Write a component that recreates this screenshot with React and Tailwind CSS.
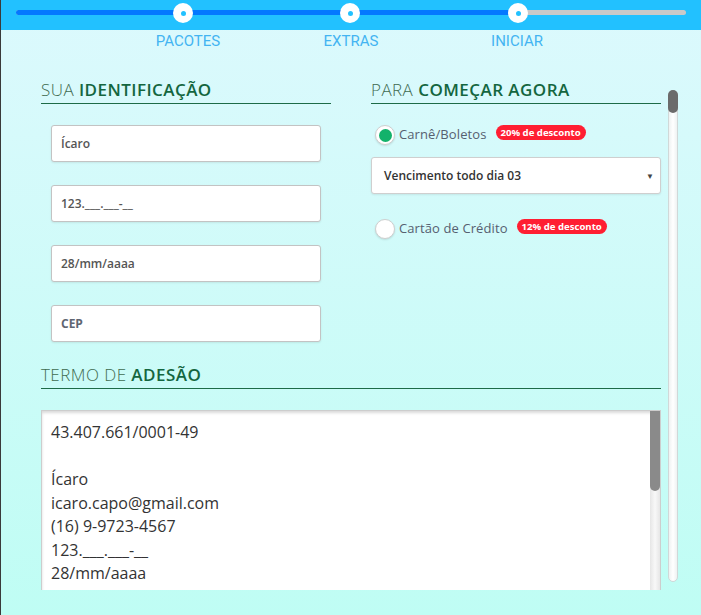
import React from 'react';

const steps = [
  { label: 'PACOTES', pos: 'left-[167px]' },
  { label: 'EXTRAS', pos: 'left-[334px]' },
  { label: 'INICIAR', pos: 'left-[502px]' },
];

function Heading({ light, bold, className = '' }) {
  return (
    <h2 className={`text-[17px] tracking-[0.45px] leading-[24px] pb-[1px] border-b border-[#1d6b47] uppercase ${className}`}>
      <span className="font-light text-[#3f6b50]">{light} </span>
      <span className="font-semibold text-[#14663f]">{bold}</span>
    </h2>
  );
}

function Field({ value, bold }) {
  return (
    <div className={`w-[270px] h-[37px] bg-white border border-[#c3c3c3] rounded-[3px] shadow-[0_1px_2px_rgba(0,0,0,0.08)] flex items-center pl-[9px] text-[12px] ${bold ? 'font-bold text-[#5f6672]' : 'font-semibold text-[#555]'}`}>
      {value}
    </div>
  );
}

function Radio({ checked, label, badge, className = '' }) {
  return (
    <div className={`flex items-center h-[20px] ${className}`}>
      <div className="w-[20px] h-[20px] rounded-full border border-[#cfcfcf] bg-white shadow-[0_1px_2px_rgba(0,0,0,0.12)] flex items-center justify-center">
        {checked && <div className="w-[13px] h-[13px] rounded-full bg-[#13b26b]" />}
      </div>
      <span className="ml-[4px] text-[13px] tracking-[0.1px] text-[#566070]">{label}</span>
      <span className="ml-[9px] self-start h-[15px] px-[5px] rounded-full bg-[#ff1e32] text-white text-[9.6px] font-bold leading-[15px]">
        {badge}
      </span>
    </div>
  );
}

export default function App() {
  const termo = ['43.407.661/0001-49', '\u00a0', 'Ícaro', 'icaro.capo@gmail.com', '(16) 9-9723-4567', '123.___.___-__', '28/mm/aaaa'];

  return (
    <div className="w-[701px] h-[615px] overflow-hidden flex flex-col border-l border-[#3a3a3a] bg-gradient-to-b from-[#dcf9fd] to-[#bffdf4] font-['Open_Sans',sans-serif]">
      {/* stepper */}
      <div className="h-[30px] shrink-0 bg-[#22c1ff] pl-[15px] pt-[10px]">
        <div className="relative w-[670px] h-[5px] rounded-full bg-[#c9c9c9]">
          <div className="w-[502px] h-[5px] rounded-full bg-[#0478ff]" />
          {steps.map((s) => (
            <div
              key={s.label}
              className={`absolute top-[-7px] ${s.pos} -ml-[10px] w-[20px] h-[20px] rounded-full bg-white flex items-center justify-center`}
            >
              <div className="w-[5px] h-[5px] rounded-full bg-[#22c1ff]" />
            </div>
          ))}
        </div>
      </div>
      <div className="h-[24px] shrink-0 flex pt-[2px] pl-[127px] text-[15px] leading-[18px] text-[#43b4f2] font-['Roboto',sans-serif]">
        <span className="w-[120px] text-center">PACOTES</span>
        <span className="w-[120px] ml-[43px] text-center">EXTRAS</span>
        <span className="w-[120px] ml-[46px] text-center">INICIAR</span>
      </div>

      {/* main */}
      <div className="h-[536px] shrink-0 flex overflow-hidden pl-[40px] pt-[24px]">
        <div className="w-[620px] flex flex-col">
          <div className="grid grid-cols-[290px_290px] gap-x-[40px]">
            <div>
              <Heading light="Sua" bold="Identificação" />
              <div className="mt-[21px] ml-[10px] flex flex-col gap-[23px]">
                <Field value="Ícaro" />
                <Field value="123.___.___-__" />
                <Field value="28/mm/aaaa" />
                <Field value="CEP" bold />
              </div>
            </div>
            <div>
              <Heading light="Para" bold="Começar Agora" />
              <Radio checked label="Carnê/Boletos" badge="20% de desconto" className="mt-[21px] ml-[4px]" />
              <div className="mt-[12px] h-[37px] bg-white border border-[#cfcfcf] rounded-[3px] shadow-[0_1px_2px_rgba(0,0,0,0.08)] flex items-center justify-between pl-[12px] pr-[6px] text-[12px] font-semibold text-[#333]">
                <span>Vencimento todo dia 03</span>
                <span className="text-[8px] text-[#444]">▼</span>
              </div>
              <Radio label="Cartão de Crédito" badge="12% de desconto" className="mt-[25px] ml-[4px]" />
            </div>
          </div>

          <Heading light="Termo de" bold="Adesão" className="mt-[21px]" />
          <div className="mt-[21px] h-[200px] shrink-0 flex bg-white border border-[#cdcdcd] shadow-[inset_0_2px_3px_rgba(0,0,0,0.15)]">
            <div className="flex-1 pl-[9px] pt-[10px] text-[16px] leading-[23.5px] text-[#333]">
              {termo.map((t, i) => (
                <div key={i}>{t}</div>
              ))}
            </div>
            <div className="w-[10px] bg-gradient-to-r from-[#e6e6e6] via-[#f8f8f8] to-[#e6e6e6]">
              <div className="h-[80px] rounded-b-full rounded-t-[4px] bg-[#8a8a8a]" />
            </div>
          </div>
        </div>

        {/* outer scrollbar */}
        <div className="ml-[7px] mt-[12px] w-[10px] h-[492px] rounded-full border border-[#d0d8d8] bg-gradient-to-r from-[#eef2f2] via-white to-[#eef2f2]">
          <div className="h-[23px] -mx-px -mt-px rounded-full bg-[#6b6b6b]" />
        </div>
      </div>
      <div className="flex-1" />
    </div>
  );
}
